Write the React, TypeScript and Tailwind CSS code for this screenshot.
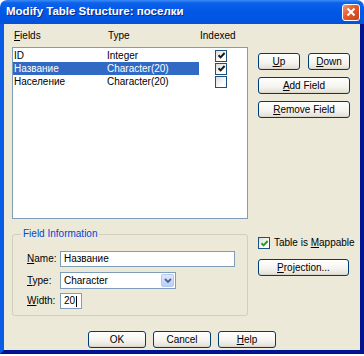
import React from "react";

const btn =
  "flex items-center justify-center h-[17px] rounded-[3px] border border-[#003C74] bg-[linear-gradient(to_bottom,#FFFFFF_0%,#F4F3EE_60%,#E6E3DA_90%,#D6D0C5_100%)] text-black text-[10px] leading-none whitespace-nowrap";

function Check({ checked, green }: { checked: boolean; green?: boolean }) {
  return (
    <span className="shrink-0 flex items-center justify-center w-[12px] h-[12px] border border-[#1C5180] bg-[linear-gradient(135deg,#DCDBD5,#FFFFFF_70%)]">
      {checked && (
        <svg width="9" height="9" viewBox="0 0 9 9">
          <path
            d="M1.5 4.2 L3.6 6.4 L7.6 2"
            fill="none"
            stroke={green ? "#21A121" : "#1A1A1A"}
            strokeWidth="2"
          />
        </svg>
      )}
    </span>
  );
}

function U({ children }: { children: React.ReactNode }) {
  return <span className="underline underline-offset-[1px]">{children}</span>;
}

const rows = [
  { name: "ID", type: "Integer", idx: true, sel: false },
  { name: "Название", type: "Character(20)", idx: true, sel: true },
  { name: "Население", type: "Character(20)", idx: false, sel: false },
];

export default function App() {
  return (
    <div className="w-[364px] h-[356px] bg-white font-['Liberation_Sans',Arial,sans-serif] text-black">
      <div className="w-[364px] h-[354px] flex flex-col rounded-t-[7px] overflow-hidden">
        {/* Title bar */}
        <div className="h-[24px] flex items-center justify-between pl-[6px] pr-[4px] bg-[linear-gradient(to_bottom,#3A8CF8_0%,#0C62EA_12%,#0258E6_45%,#0055E2_80%,#0A4FD6_100%)]">
          <span className="text-white font-bold text-[11.5px] [text-shadow:1px_1px_0_#0A2A8C]">
            Modify Table Structure: поселки
          </span>
          <span className="flex items-center justify-center w-[18px] h-[17px] rounded-[3px] border border-white bg-[linear-gradient(135deg,#F09A78_0%,#E45A2C_45%,#C8401A_100%)]">
            <svg width="10" height="10" viewBox="0 0 10 10">
              <path d="M1.5 1.5 L8.5 8.5 M8.5 1.5 L1.5 8.5" stroke="white" strokeWidth="2" />
            </svg>
          </span>
        </div>
        {/* Body */}
        <div className="flex-1 flex flex-col bg-[#ECE9D8] border-l-[4px] border-r-[4px] border-b-[4px] border-l-[#0A5CE6] border-r-[#00148F] border-b-[#00158F]">
          {/* Row A */}
          <div className="flex pt-[6px] pl-[8px]">
            <div className="w-[236px] flex flex-col">
              <div className="grid grid-cols-[94px_92px_1fr] pl-[2px] h-[12px] items-center text-[10px] leading-none">
                <span>
                  <U>F</U>ields
                </span>
                <span>Type</span>
                <span>Indexed</span>
              </div>
              <div className="mt-[5px] h-[172px] border border-[#7F9DB9] bg-white pt-[1px] text-[10px] leading-none">
                {rows.map((r) => (
                  <div key={r.name} className="flex items-center h-[13px]">
                    <div
                      className={
                        "flex items-center w-[186px] h-[13px] " +
                        (r.sel ? "bg-[#316AC5] text-white" : "")
                      }
                    >
                      <span className="w-[94px] pl-[1px]">{r.name}</span>
                      <span>{r.type}</span>
                    </div>
                    <span className="ml-[16px]">
                      <Check checked={r.idx} />
                    </span>
                  </div>
                ))}
              </div>
            </div>
            <div className="ml-[10px] w-[92px] pt-[23px] flex flex-col">
              <div className="flex gap-[8px]">
                <div className={btn + " w-[42px]"}>
                  <U>U</U>p
                </div>
                <div className={btn + " w-[42px]"}>
                  <U>D</U>own
                </div>
              </div>
              <div className={btn + " w-[92px] mt-[7px]"}>
                <U>A</U>dd Field
              </div>
              <div className={btn + " w-[92px] mt-[7px]"}>
                <U>R</U>emove Field
              </div>
            </div>
          </div>
          {/* Row B */}
          <div className="flex pl-[8px]">
            <div className="relative mt-[15px] w-[236px] h-[82px] border border-[#D0D0BF] rounded-[3px] pt-[16px] pl-[14px] flex flex-col text-[10px] leading-none">
              <span className="absolute -top-[6px] left-[8px] px-[2px] bg-[#ECE9D8] text-[#0046D5] leading-none">
                Field Information
              </span>
              <div className="flex items-center">
                <span className="w-[33px]">
                  <U>N</U>ame:
                </span>
                <div className="w-[175px] h-[16px] border border-[#7F9DB9] bg-white flex items-center pl-[3px]">
                  Название
                </div>
              </div>
              <div className="flex items-center mt-[5px]">
                <span className="w-[33px]">
                  <U>T</U>ype:
                </span>
                <div className="w-[116px] h-[17px] border border-[#7F9DB9] bg-white flex items-center pl-[3px] pr-[1px] justify-between">
                  <span>Character</span>
                  <span className="flex items-center justify-center w-[13px] h-[13px] rounded-[2px] border border-[#B5C8F0] bg-[linear-gradient(to_bottom,#DDE8FE,#B9CEFA)]">
                    <svg width="8" height="6" viewBox="0 0 8 6">
                      <path d="M1 1 L4 4 L7 1" fill="none" stroke="#4D6185" strokeWidth="1.8" />
                    </svg>
                  </span>
                </div>
              </div>
              <div className="flex items-center mt-[4px]">
                <span className="w-[33px]">
                  <U>W</U>idth:
                </span>
                <div className="w-[22px] h-[16px] border border-[#7F9DB9] bg-white flex items-center pl-[3px]">
                  20
                  <span className="ml-[1px] w-[1px] h-[11px] bg-black" />
                </div>
              </div>
            </div>
            <div className="ml-[10px] w-[96px] pt-[18px] flex flex-col">
              <div className="flex items-center text-[10px] leading-none whitespace-nowrap">
                <Check checked green />
                <span className="ml-[4px]">
                  Table is <U>M</U>appable
                </span>
              </div>
              <div className={btn + " w-[91px] mt-[10px]"}>
                <U>P</U>rojection...
              </div>
            </div>
          </div>
          {/* Bottom buttons */}
          <div className="flex justify-center gap-[7px] mt-[15px]">
            <div className={btn + " w-[58px]"}>OK</div>
            <div className={btn + " w-[58px]"}>Cancel</div>
            <div className={btn + " w-[58px]"}>
              <U>H</U>elp
            </div>
          </div>
        </div>
      </div>
    </div>
  );
}
